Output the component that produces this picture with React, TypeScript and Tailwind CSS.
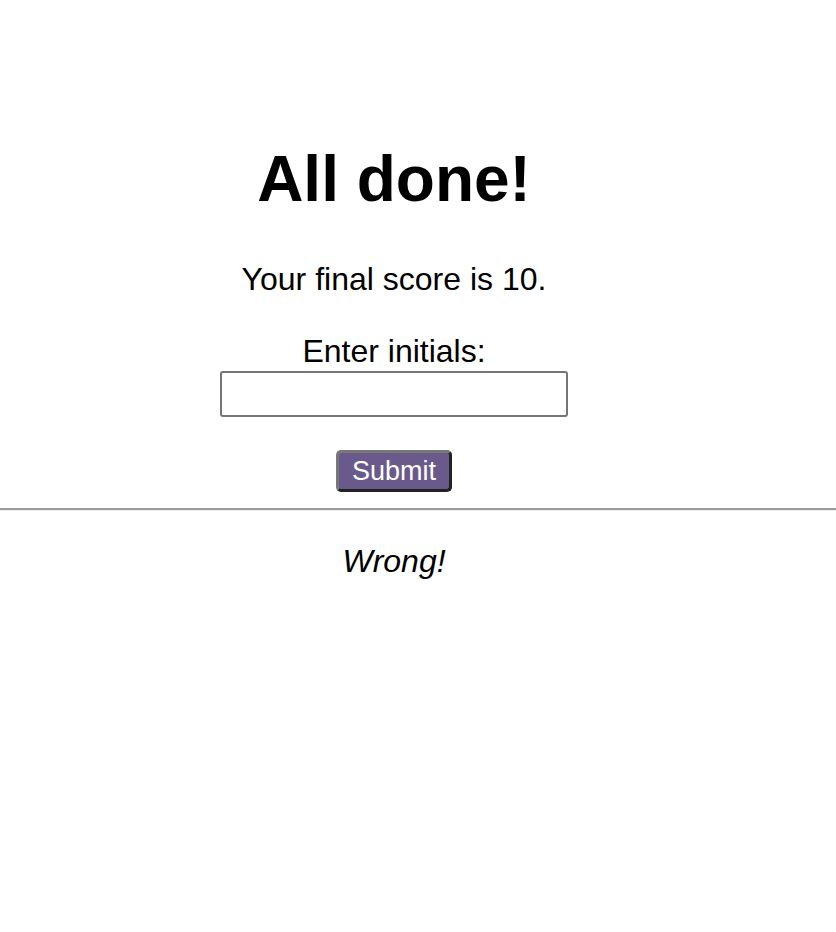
export default function App() {
  return (
    <main className="min-h-screen bg-white text-black font-['Liberation_Sans',Arial,sans-serif]">
      <section className="w-[788px] flex flex-col items-center pt-[147px]">
        <h1 className="text-[64px] font-bold leading-none">All done!</h1>
        <p className="mt-[52px] text-[32px] leading-none">Your final score is 10.</p>
        <form
          className="flex flex-col items-center"
          onSubmit={(e) => e.preventDefault()}
        >
          <label className="mt-[40px] text-[32px] leading-none">Enter initials:</label>
          <input
            type="text"
            className="mt-[4px] w-[348px] h-[46px] border-2 border-[#767676] rounded-[3px] bg-white px-2 text-[26px] outline-none"
          />
          <button
            type="submit"
            className="mt-[33px] w-[116px] h-[42px] flex items-center justify-center rounded-[5px] border-[3px] border-t-[#777777] border-l-[#777777] border-r-[#222222] border-b-[#222222] bg-[#6a5a8c] text-white text-[27px] leading-none"
          >
            Submit
          </button>
        </form>
      </section>
      <div className="mt-[16px] w-full h-[3px] border-t-2 border-[#9a9a9a] border-b border-b-[#eeeeee]" />
      <section className="w-[788px] flex justify-center pt-[34px]">
        <p className="text-[32px] italic leading-none">Wrong!</p>
      </section>
    </main>
  );
}
